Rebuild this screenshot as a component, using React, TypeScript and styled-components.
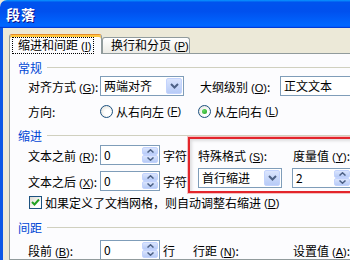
import styled, { createGlobalStyle } from "styled-components";

const GlobalStyle = createGlobalStyle`
  html, body {
    margin: 0;
    padding: 0;
    overflow: hidden;
    background: #ece9d8;
  }
  body {
    font-family: "Noto Sans CJK SC", "Liberation Sans", sans-serif;
    font-size: 12px;
    color: #000;
  }
`;

const Window = styled.div`
  width: 350px;
  height: 260px;
  overflow: hidden;
  display: flex;
  flex-direction: column;
  background: #ece9d8;
`;

const TitleBar = styled.div`
  flex: none;
  height: 28px;
  display: flex;
  align-items: center;
  padding-left: 6px;
  border-top-left-radius: 7px;
  background: linear-gradient(
    to bottom,
    #0997ff 0%,
    #0053ee 8%,
    #0050ee 40%,
    #0066ff 88%,
    #0066ff 93%,
    #005bff 95%,
    #003dd7 96%,
    #003dd7 100%
  );
  color: #fff;
  font-size: 14px;
  font-weight: bold;
  letter-spacing: 1px;
  text-shadow: 1px 1px #0f1089;
`;

const Frame = styled.div`
  flex: 1;
  min-height: 0;
  min-width: 0;
  display: flex;
  flex-direction: column;
  border-left: 3px solid #0a56e6;
  padding: 6px 0 0 6px;
`;

const TabStrip = styled.div`
  display: flex;
  align-items: flex-end;
  height: 20px;
  margin-bottom: -1px;
  position: relative;
  z-index: 1;
`;

const Tab = styled.div<{ $active?: boolean; $w: number }>`
  box-sizing: border-box;
  width: ${(p) => p.$w}px;
  display: flex;
  align-items: center;
  border: 1px solid #919b9c;
  border-bottom: none;
  border-radius: 3px 3px 0 0;
  white-space: nowrap;
  ${(p) =>
    p.$active
      ? `
    height: 20px;
    padding: 2px 0 0 3px;
    background: #fcfcfe;
    border-top: 1px solid #e68b2c;
    box-shadow: inset 0 2px 0 #ffc73c;
  `
      : `
    height: 16px;
    margin-bottom: 1px;
    padding: 0 0 0 3px;
    background: linear-gradient(to bottom, #ffffff, #f3f3ef 60%, #ecebe6);
  `}
`;

const FocusText = styled.span<{ $focus?: boolean }>`
  padding: 0 2px 0 5px;
  line-height: 13px;
  outline: ${(p) => (p.$focus ? "1px dotted #000" : "none")};
`;

const Panel = styled.div`
  flex: 1;
  min-width: 0;
  overflow: hidden;
  background: #fcfcfe;
  border: 1px solid #919b9c;
  border-right: none;
  padding: 6px 0 0 8px;
`;

const GroupHeader = styled.div<{ $mt?: number }>`
  display: flex;
  align-items: center;
  height: 14px;
  margin-top: ${(p) => p.$mt ?? 0}px;
  color: #0046d5;
  gap: 5px;
  &::after {
    content: "";
    flex: 1;
    height: 1px;
    background: #d0d0bf;
  }
`;

const Row = styled.div<{ $mt?: number; $pl?: number }>`
  display: flex;
  align-items: center;
  height: 20px;
  margin-top: ${(p) => p.$mt ?? 0}px;
  padding-left: ${(p) => p.$pl ?? 10}px;
  white-space: nowrap;
`;

const Label = styled.span<{ $w?: number; $ml?: number }>`
  flex: none;
  width: ${(p) => (p.$w ? `${p.$w}px` : "auto")};
  margin-left: ${(p) => p.$ml ?? 0}px;
  white-space: nowrap;
`;

const AccKey = styled.span`
  font-family: "Liberation Sans", sans-serif;
  font-size: 11px;
`;

const Field = styled.div<{ $w: number }>`
  flex: none;
  box-sizing: border-box;
  width: ${(p) => p.$w}px;
  height: 20px;
  display: flex;
  align-items: center;
  border: 1px solid #7f9db9;
  background: #fff;
  padding: 1px;
`;

const FieldText = styled.span`
  flex: 1;
  padding-left: 2px;
  line-height: 16px;
`;

const DropButton = styled.div`
  flex: none;
  box-sizing: border-box;
  width: 16px;
  height: 16px;
  display: flex;
  align-items: center;
  justify-content: center;
  border: 1px solid #c3d3fd;
  border-radius: 2px;
  background: linear-gradient(to bottom, #dbe5fd, #b7cbf7);
`;

const SpinButtons = styled.div`
  flex: none;
  width: 16px;
  height: 16px;
  display: flex;
  flex-direction: column;
`;

const SpinHalf = styled.div`
  flex: 1;
  box-sizing: border-box;
  display: flex;
  align-items: center;
  justify-content: center;
  border: 1px solid #c3d3fd;
  border-radius: 2px;
  background: linear-gradient(to bottom, #dbe5fd, #b7cbf7);
`;

const Unit = styled.span`
  margin-left: 3px;
`;

const RadioOption = styled.label<{ $w?: number }>`
  display: flex;
  align-items: center;
  gap: 3px;
  width: ${(p) => (p.$w ? `${p.$w}px` : "auto")};
`;

const RadioCircle = styled.span<{ $checked?: boolean }>`
  box-sizing: border-box;
  width: 13px;
  height: 13px;
  border-radius: 50%;
  border: 1px solid #1c5180;
  background: radial-gradient(circle at 60% 60%, #ffffff 30%, #dcdad0 100%);
  display: flex;
  align-items: center;
  justify-content: center;
  &::after {
    content: "";
    display: ${(p) => (p.$checked ? "block" : "none")};
    width: 5px;
    height: 5px;
    border-radius: 50%;
    background: radial-gradient(circle at 35% 35%, #63d963, #21a121);
  }
`;

const IndentBlock = styled.div`
  display: flex;
  align-items: flex-start;
`;

const LeftCol = styled.div`
  flex: none;
  width: 170px;
  padding-top: 3px;
  display: flex;
  flex-direction: column;
`;

const Highlight = styled.div`
  flex: none;
  width: 220px;
  height: 56px;
  box-sizing: border-box;
  margin-top: -5px;
  border: 2px solid #e3252b;
  box-shadow: 0 0 0 1px rgba(240, 120, 120, 0.45),
    inset 2px 2px 3px rgba(0, 0, 0, 0.12);
  padding: 8px 0 0 8px;
  display: flex;
  flex-direction: column;
`;

const HighlightRow = styled.div<{ $mt?: number; $h: number }>`
  display: flex;
  align-items: center;
  height: ${(p) => p.$h}px;
  margin-top: ${(p) => p.$mt ?? 0}px;
  white-space: nowrap;
`;

const CheckRow = styled.div`
  display: flex;
  align-items: center;
  gap: 3px;
  height: 13px;
  margin-top: 3px;
  padding-left: 11px;
  white-space: nowrap;
`;

const CheckBox = styled.span`
  box-sizing: border-box;
  flex: none;
  width: 13px;
  height: 13px;
  border: 1px solid #1c5180;
  background: linear-gradient(135deg, #dcdad0, #ffffff 70%);
  display: flex;
  align-items: center;
  justify-content: center;
`;

const ChevronDown = () => (
  <svg width="9" height="6" viewBox="0 0 9 6">
    <path d="M1 1 L4.5 4.5 L8 1" fill="none" stroke="#4d6185" strokeWidth="2" />
  </svg>
);

const SpinArrow = ({ up }: { up?: boolean }) => (
  <svg width="7" height="4" viewBox="0 0 7 4">
    <path
      d={up ? "M0.5 3.5 L3.5 0.8 L6.5 3.5" : "M0.5 0.5 L3.5 3.2 L6.5 0.5"}
      fill="none"
      stroke="#4d6185"
      strokeWidth="1.5"
    />
  </svg>
);

const Check = () => (
  <svg width="9" height="9" viewBox="0 0 9 9">
    <path d="M1 4 L3.5 6.5 L8 1.5" fill="none" stroke="#21a121" strokeWidth="2" />
  </svg>
);

const Combo = ({ value, width }: { value: string; width: number }) => (
  <Field $w={width}>
    <FieldText>{value}</FieldText>
    <DropButton>
      <ChevronDown />
    </DropButton>
  </Field>
);

const Spinner = ({ value }: { value: string }) => (
  <Field $w={60}>
    <FieldText>{value}</FieldText>
    <SpinButtons>
      <SpinHalf>
        <SpinArrow up />
      </SpinHalf>
      <SpinHalf>
        <SpinArrow />
      </SpinHalf>
    </SpinButtons>
  </Field>
);

const Acc = ({ k }: { k: string }) => (
  <AccKey>
    {" "}(<u>{k}</u>)
  </AccKey>
);

export default function App() {
  return (
    <Window>
      <GlobalStyle />
      <TitleBar>段落</TitleBar>
      <Frame>
        <TabStrip>
          <Tab $active $w={93}>
            <FocusText $focus>
              缩进和间距<Acc k="I" />
            </FocusText>
          </Tab>
          <Tab $w={88}>
            <FocusText>
              换行和分页<Acc k="P" />
            </FocusText>
          </Tab>
        </TabStrip>
        <Panel>
          <GroupHeader>常规</GroupHeader>
          <Row $mt={2}>
            <Label $w={72}>
              对齐方式<Acc k="G" />:
            </Label>
            <Combo value="两端对齐" width={84} />
            <Label $w={80} $ml={16}>
              大纲级别<Acc k="O" />:
            </Label>
            <Field $w={100}>
              <FieldText>正文文本</FieldText>
            </Field>
          </Row>
          <Row $mt={5}>
            <Label $w={72}>方向:</Label>
            <RadioOption $w={98}>
              <RadioCircle />
              从右向左<Acc k="F" />
            </RadioOption>
            <RadioOption>
              <RadioCircle $checked />
              从左向右<Acc k="L" />
            </RadioOption>
          </Row>

          <GroupHeader $mt={7}>缩进</GroupHeader>
          <IndentBlock>
            <LeftCol>
              <Row>
                <Label $w={72}>
                  文本之前<Acc k="R" />:
                </Label>
                <Spinner value="0" />
                <Unit>字符</Unit>
              </Row>
              <Row $mt={6}>
                <Label $w={72}>
                  文本之后<Acc k="X" />:
                </Label>
                <Spinner value="0" />
                <Unit>字符</Unit>
              </Row>
            </LeftCol>
            <Highlight>
              <HighlightRow $h={16}>
                <Label $w={95}>
                  特殊格式<Acc k="S" />:
                </Label>
                <Label>
                  度量值<Acc k="Y" />:
                </Label>
              </HighlightRow>
              <HighlightRow $h={20} $mt={5}>
                <Combo value="首行缩进" width={84} />
                <Label $w={10} />
                <Spinner value="2" />
              </HighlightRow>
            </Highlight>
          </IndentBlock>
          <CheckRow>
            <CheckBox>
              <Check />
            </CheckBox>
            如果定义了文档网格，则自动调整右缩进<Acc k="D" />
          </CheckRow>

          <GroupHeader $mt={11}>间距</GroupHeader>
          <Row $mt={6}>
            <Label $w={72}>
              段前<Acc k="B" />:
            </Label>
            <Spinner value="0" />
            <Unit>行</Unit>
            <Label $w={100} $ml={18}>
              行距<Acc k="N" />:
            </Label>
            <Label>
              设置值<Acc k="A" />:
            </Label>
          </Row>
        </Panel>
      </Frame>
    </Window>
  );
}
